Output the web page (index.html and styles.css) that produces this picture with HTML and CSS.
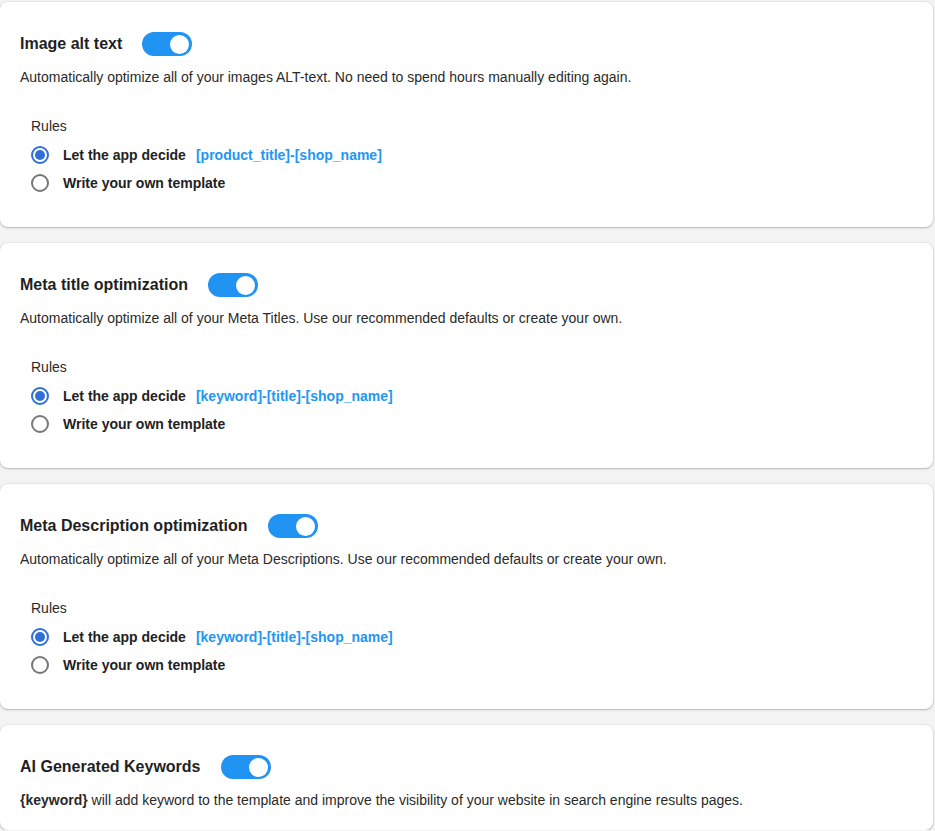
FILE: index.html
```html
<!DOCTYPE html>
<html lang="en">

<head>
    <meta charset="UTF-8">
    <meta name="viewport" content="width=device-width, initial-scale=1.0">
    <title>SEO settings</title>
    <link rel="stylesheet" href="styles.css">
</head>

<body>
    <div class="page">
        <section class="card">
            <div class="card-head">
                <h2 class="title">Image alt text</h2>
                <span class="toggle on"><span class="knob"></span></span>
            </div>
            <p class="desc">Automatically optimize all of your images ALT-text. No need to spend hours manually editing again.</p>
            <div class="rules">
                <p class="rules-label">Rules</p>
                <label class="option">
                    <span class="radio checked"></span>
                    <strong>Let the app decide</strong>
                    <span class="tpl">[product_title]-[shop_name]</span>
                </label>
                <label class="option">
                    <span class="radio"></span>
                    <strong>Write your own template</strong>
                </label>
            </div>
        </section>

        <section class="card">
            <div class="card-head">
                <h2 class="title">Meta title optimization</h2>
                <span class="toggle on"><span class="knob"></span></span>
            </div>
            <p class="desc">Automatically optimize all of your Meta Titles. Use our recommended defaults or create your own.</p>
            <div class="rules">
                <p class="rules-label">Rules</p>
                <label class="option">
                    <span class="radio checked"></span>
                    <strong>Let the app decide</strong>
                    <span class="tpl">[keyword]-[title]-[shop_name]</span>
                </label>
                <label class="option">
                    <span class="radio"></span>
                    <strong>Write your own template</strong>
                </label>
            </div>
        </section>

        <section class="card">
            <div class="card-head">
                <h2 class="title">Meta Description optimization</h2>
                <span class="toggle on"><span class="knob"></span></span>
            </div>
            <p class="desc">Automatically optimize all of your Meta Descriptions. Use our recommended defaults or create your own.</p>
            <div class="rules">
                <p class="rules-label">Rules</p>
                <label class="option">
                    <span class="radio checked"></span>
                    <strong>Let the app decide</strong>
                    <span class="tpl">[keyword]-[title]-[shop_name]</span>
                </label>
                <label class="option">
                    <span class="radio"></span>
                    <strong>Write your own template</strong>
                </label>
            </div>
        </section>

        <section class="card card-short">
            <div class="card-head">
                <h2 class="title">AI Generated Keywords</h2>
                <span class="toggle on"><span class="knob"></span></span>
            </div>
            <p class="desc"><strong>{keyword}</strong> will add keyword to the template and improve the visibility of your website in search engine results pages.</p>
        </section>
    </div>
</body>

</html>
```

FILE: styles.css
```css
body {
    margin: 0;
    background: #f3f3f4;
    font-family: "Liberation Sans", Arial, sans-serif;
    color: #222;
}

h2,
p {
    margin: 0;
}

.page {
    display: flex;
    flex-direction: column;
    gap: 16px;
    padding: 2px 2px 0 0;
}

.card {
    background: #fff;
    border-radius: 8px;
    box-shadow: 0 0 0 1px rgba(63, 63, 68, 0.06), 0 1px 2px rgba(63, 63, 68, 0.3);
    padding: 30px 20px 30px 20px;
}

.card-short {
    padding-bottom: 20px;
}

.card-head {
    display: flex;
    align-items: center;
    height: 24px;
}

.title {
    font-size: 16px;
    font-weight: bold;
    color: #1f1f1f;
    margin-right: 20px;
}

.toggle {
    display: inline-flex;
    align-items: center;
    justify-content: flex-end;
    width: 50px;
    height: 24px;
    border-radius: 12px;
    background: #2193f3;
    padding: 0 3px;
    box-sizing: border-box;
}

.knob {
    width: 19px;
    height: 19px;
    border-radius: 50%;
    background: #fff;
}

.desc {
    margin-top: 11px;
    font-size: 14px;
    line-height: 20px;
    color: #2a2a2a;
}

.rules {
    margin: 29px 0 0 11px;
}

.rules-label {
    font-size: 14px;
    line-height: 20px;
    color: #2a2a2a;
}

.option {
    display: flex;
    align-items: center;
    height: 28px;
    font-size: 14px;
    color: #222;
}

.option:first-of-type {
    margin-top: 5px;
}

.radio {
    width: 18px;
    height: 18px;
    box-sizing: border-box;
    border: 2px solid #777;
    border-radius: 50%;
    margin-right: 14px;
    position: relative;
}

.radio.checked {
    border-color: #2f6fd8;
}

.radio.checked::after {
    content: "";
    position: absolute;
    left: 2px;
    top: 2px;
    width: 10px;
    height: 10px;
    border-radius: 50%;
    background: #2f6fd8;
}

.tpl {
    margin-left: 10px;
    color: #2196f3;
    font-weight: bold;
}
```
